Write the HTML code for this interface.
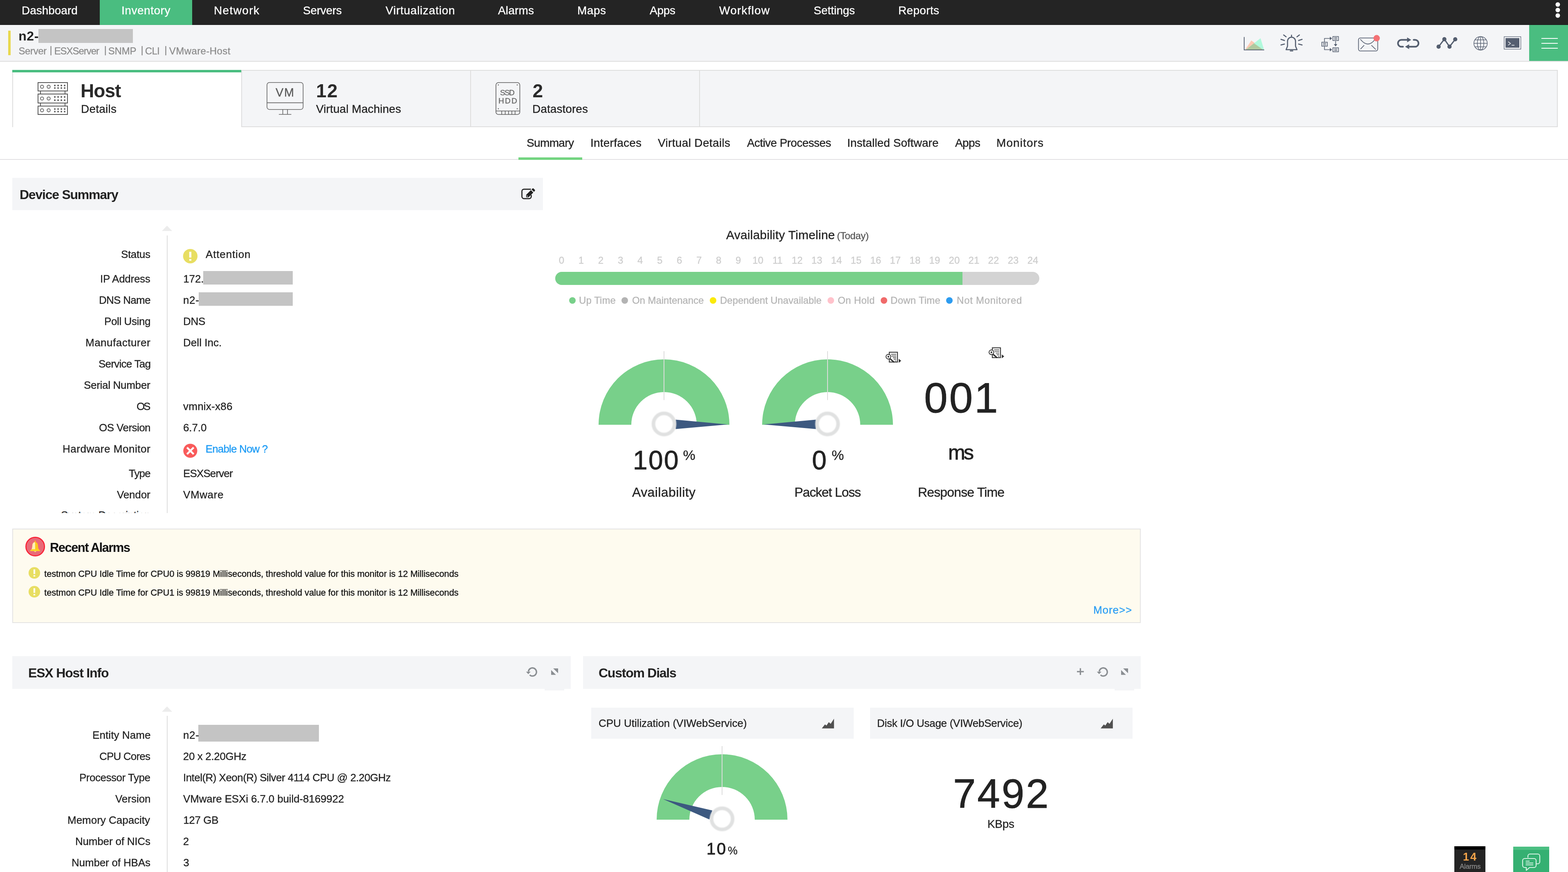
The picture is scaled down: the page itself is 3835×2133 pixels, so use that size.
<!DOCTYPE html>
<html lang="en">
<head>
<meta charset="utf-8">
<title>n2 - Host Details</title>
<style>
html,body{margin:0;padding:0;}
body{width:3835px;height:2133px;overflow:hidden;background:#fff;position:relative;font-family:"Liberation Sans",sans-serif;}
.b{position:absolute;}
.t{position:absolute;white-space:nowrap;font-family:"Liberation Sans",sans-serif;-webkit-text-stroke:0.35px currentColor;}
.k{-webkit-text-stroke:0.9px currentColor;}
.n{-webkit-text-stroke:0 currentColor;}
.h{width:60px;text-align:center;font-size:24px;line-height:29px;color:#cdcdcd;}
svg{position:absolute;left:0;top:0;}
</style>
</head>
<body>
<!-- top navigation -->
<div class="b" style="left:0;top:0;width:3835px;height:61px;background:#242424;border-bottom:1px solid #151515;box-sizing:border-box"></div>
<div class="b" style="left:244px;top:0;width:226px;height:61px;background:#4abd80;border-bottom:1px solid #3cae72;box-sizing:border-box"></div>
<!-- device header strip -->
<div class="b" style="left:0;top:61px;width:3835px;height:88px;background:#f4f5f7;border-bottom:2px solid #dedede"></div>
<div class="b" style="left:20px;top:75px;width:6px;height:60px;background:#e8d84f"></div>
<div class="b" style="left:94px;top:71px;width:231px;height:34px;background:#c4c4c4"></div>
<div class="b" style="left:3740px;top:61px;width:95px;height:88px;background:#4abd80"></div>
<!-- big tabs -->
<div class="b" style="left:30px;top:171px;width:3780px;height:140px;background:#f4f5f7;border:2px solid #dedede;box-sizing:border-box"></div>
<div class="b" style="left:30px;top:171px;width:560px;height:140px;background:#fff;border-left:2px solid #dedede;box-sizing:border-box"></div>
<div class="b" style="left:30px;top:171px;width:560px;height:6px;background:#4abd80"></div>
<div class="b" style="left:590px;top:171px;width:2px;height:140px;background:#dedede"></div>
<div class="b" style="left:1150px;top:172px;width:2px;height:138px;background:#dedede"></div>
<div class="b" style="left:1710px;top:172px;width:2px;height:138px;background:#dedede"></div>
<!-- sub tabs -->
<div class="b" style="left:0;top:389px;width:3835px;height:2px;background:#e2e1e3"></div>
<div class="b" style="left:1268px;top:385px;width:156px;height:6px;background:#73d480"></div>
<!-- device summary -->
<div class="b" style="left:30px;top:435px;width:1298px;height:79px;background:#f4f5f7"></div>
<div class="b" style="left:408px;top:576px;width:2px;height:679px;background:#dedede"></div>
<div class="b" style="left:497px;top:663px;width:219px;height:32.5px;background:#c4c4c4"></div>
<div class="b" style="left:486px;top:715px;width:230px;height:32.5px;background:#c4c4c4"></div>
<div class="b" style="left:0;top:1240px;width:409px;height:15px;overflow:hidden"><div class="t" style="right:41.5px;top:5px;font-size:26px;line-height:31px;color:#222;letter-spacing:-0.3px">System Description</div></div>
<!-- availability timeline -->
<div class="b" style="left:1358px;top:665px;width:1184px;height:32px;border-radius:16px;background:#d3d3d3;overflow:hidden"><div style="width:996px;height:32px;background:#78d08a"></div></div>
<!-- recent alarms -->
<div class="b" style="left:30px;top:1293px;width:2760px;height:231px;background:#fefbef;border:2px solid #e4e4e4;box-sizing:border-box"></div>
<!-- ESX host info -->
<div class="b" style="left:30px;top:1605px;width:1366px;height:80px;background:#f4f5f7"></div>
<div class="b" style="left:1332px;top:1685px;width:48px;height:4px;background:#f4f5f7"></div>
<div class="b" style="left:408px;top:1751px;width:2px;height:382px;background:#dedede"></div>
<div class="b" style="left:485px;top:1773px;width:295px;height:40.5px;background:#c4c4c4"></div>
<!-- custom dials -->
<div class="b" style="left:1426px;top:1605px;width:1364px;height:80px;background:#f4f5f7"></div>
<div class="b" style="left:2726px;top:1685px;width:48px;height:4px;background:#f4f5f7"></div>
<div class="b" style="left:1446px;top:1731px;width:642px;height:75.5px;background:#f4f5f7"></div>
<div class="b" style="left:2128px;top:1731px;width:642px;height:75.5px;background:#f4f5f7"></div>
<!-- bottom right widgets -->
<div class="b" style="left:3557px;top:2070px;width:76px;height:63px;background:#242424;border-top:8px solid #000;box-sizing:border-box"></div>
<div class="b" style="left:3701px;top:2071px;width:88px;height:62px;background:#35b072;border-top:8px solid #4bbf82;box-sizing:border-box"></div>

<svg width="3835" height="2133" viewBox="0 0 3835 2133">
<!-- three dots -->
<g fill="#fff"><circle cx="3810" cy="11" r="5.5"/><circle cx="3810" cy="24.5" r="5.5"/><circle cx="3810" cy="38" r="5.5"/></g>
<!-- hamburger -->
<g stroke="#fff" stroke-width="2"><path d="M3770 94H3810M3770 106H3810M3770 118H3810"/></g>
<!-- toolbar icon 1: area chart -->
<g>
<polygon points="3045.5,121.5 3060.5,99 3091.5,121.5" fill="#fdc9b3"/>
<polygon points="3047,121.5 3083,93.5 3091.5,121.5" fill="#adf9da" fill-opacity="0.95"/>
<polygon points="3047,121.5 3067,106 3089,121.5" fill="#b0c99f"/>
<path d="M3043 90.5V122.2H3092" fill="none" stroke="#4f596a" stroke-width="1.8"/>
</g>
<!-- toolbar icon 2: bell with rays -->
<g fill="none" stroke="#535d6e" stroke-width="2.6" stroke-linecap="round" stroke-linejoin="round">
<path d="M3145.5 121.5H3172.2L3168.6 113V101.5C3168.6 95.5 3164.5 91 3158.8 91C3153.1 91 3149 95.5 3149 101.5V113Z"/>
<path d="M3158.8 86V90.5M3155.8 124.5H3161.8"/>
<path d="M3139.5 85.5L3145.5 90M3133 96.3L3141.5 99M3133 110L3141.5 107.8M3178.1 85.5L3172.1 90M3184.6 96.3L3176.1 99M3184.6 110L3176.1 107.8"/>
</g>
<!-- toolbar icon 3: workflow -->
<g fill="none" stroke="#535d6e" stroke-width="1.6">
<rect x="3260" y="89.4" width="13.6" height="9.8"/><path d="M3263 92.6H3270.6M3263 96H3270.6"/>
<rect x="3232.8" y="103.3" width="13.6" height="9.6"/><path d="M3235.8 106.4H3243.4M3235.8 109.8H3243.4"/>
<rect x="3260" y="116.8" width="13.6" height="9.8"/><path d="M3263 120H3270.6M3263 123.4H3270.6"/>
<path d="M3239.4 102.5V94H3253M3239.4 113.6V121.5H3253M3266.6 100.5V109"/>
</g>
<g fill="#535d6e"><polygon points="3252.5,89.8 3258,94 3252.5,98.2"/><polygon points="3252.5,117.3 3258,121.5 3252.5,125.7"/><polygon points="3262.4,108 3270.8,108 3266.6,113.5"/></g>
<!-- toolbar icon 4: envelope -->
<g fill="none" stroke="#5b6475" stroke-width="1.8" stroke-linecap="round">
<rect x="3322.6" y="92.8" width="47" height="31.8" rx="4.5"/>
<path d="M3327.6 96.5Q3345.8 119 3363 96.5M3336 111.2L3328 119.6M3354.6 111.2L3364.4 120.6"/>
</g>
<circle cx="3367" cy="93.4" r="7.8" fill="#f47174"/>
<!-- toolbar icon 5: loop -->
<g fill="none" stroke="#535d6e" stroke-width="4" stroke-linecap="round">
<path d="M3443 97.5H3427.5A8.4 8.4 0 0 0 3427.5 114.3H3431.5"/>
<path d="M3445 114.3H3461A8.4 8.4 0 0 0 3461 97.5H3457.5"/>
</g>
<g fill="#535d6e"><polygon points="3441.5,91.5 3451.5,97.5 3441.5,103.5"/><polygon points="3446.5,108.3 3436.5,114.3 3446.5,120.3"/></g>
<!-- toolbar icon 6: line nodes -->
<g fill="#535d6e" stroke="#535d6e" stroke-width="3"><path d="M3518.5 114.2L3532.6 95.8L3545.2 114.2L3559.2 96.2" fill="none"/><circle cx="3518.5" cy="114.2" r="3.6"/><circle cx="3532.6" cy="95.8" r="3.6"/><circle cx="3545.2" cy="114.2" r="3.6"/><circle cx="3559.2" cy="96.2" r="3.6"/></g>
<!-- toolbar icon 7: globe -->
<g fill="none" stroke="#5b6475" stroke-width="1.5">
<circle cx="3621.2" cy="106" r="16.4"/><ellipse cx="3621.2" cy="106" rx="8" ry="16.4"/><path d="M3621.2 89.6V122.4M3604.8 106H3637.6M3607.2 97.5H3635.2M3607.2 114.5H3635.2"/>
</g>
<!-- toolbar icon 8: terminal -->
<rect x="3678.8" y="89.7" width="40.8" height="30.6" fill="#f4f5f7" stroke="#535d6e" stroke-width="1.2"/>
<rect x="3682.2" y="93.2" width="33.8" height="23.4" fill="#555e70"/>
<path d="M3688.6 102L3694.4 106.3L3688.6 110.6M3697 110.6H3704" fill="none" stroke="#e4e6ea" stroke-width="1.6"/>

<!-- host icon -->
<g fill="none" stroke="#585858" stroke-width="2">
<rect x="93" y="202" width="72" height="20.5"/><rect x="93" y="230" width="72" height="22"/><rect x="93" y="259.5" width="72" height="20.5"/>
<path d="M99 222.5V230M159 222.5V230M99 252V259.5M159 252V259.5"/>
</g>
<g fill="none" stroke="#777" stroke-width="2.1">
<circle cx="102.8" cy="212.2" r="3.8"/><circle cx="119" cy="212.2" r="3.8"/>
<circle cx="102.8" cy="241" r="3.8"/><circle cx="119" cy="241" r="3.8"/>
<circle cx="102.8" cy="269.8" r="3.8"/><circle cx="119" cy="269.8" r="3.8"/>
</g>
<g fill="#5c5c5c">
<rect x="132.3" y="207.3" width="3.6" height="3.6" rx="0.6"/><rect x="140.3" y="207.3" width="3.6" height="3.6" rx="0.6"/><rect x="148.3" y="207.3" width="3.6" height="3.6" rx="0.6"/><rect x="156.3" y="207.3" width="3.6" height="3.6" rx="0.6"/>
<rect x="132.3" y="213.4" width="3.6" height="3.6" rx="0.6"/><rect x="140.3" y="213.4" width="3.6" height="3.6" rx="0.6"/><rect x="148.3" y="213.4" width="3.6" height="3.6" rx="0.6"/><rect x="156.3" y="213.4" width="3.6" height="3.6" rx="0.6"/>
<rect x="132.3" y="235.3" width="3.6" height="3.6" rx="0.6"/><rect x="140.3" y="235.3" width="3.6" height="3.6" rx="0.6"/><rect x="148.3" y="235.3" width="3.6" height="3.6" rx="0.6"/><rect x="156.3" y="235.3" width="3.6" height="3.6" rx="0.6"/>
<rect x="132.3" y="243.3" width="3.6" height="3.6" rx="0.6"/><rect x="140.3" y="243.3" width="3.6" height="3.6" rx="0.6"/><rect x="148.3" y="243.3" width="3.6" height="3.6" rx="0.6"/><rect x="156.3" y="243.3" width="3.6" height="3.6" rx="0.6"/>
<rect x="132.3" y="265" width="3.6" height="3.6" rx="0.6"/><rect x="140.3" y="265" width="3.6" height="3.6" rx="0.6"/><rect x="148.3" y="265" width="3.6" height="3.6" rx="0.6"/><rect x="156.3" y="265" width="3.6" height="3.6" rx="0.6"/>
<rect x="132.3" y="271.2" width="3.6" height="3.6" rx="0.6"/><rect x="140.3" y="271.2" width="3.6" height="3.6" rx="0.6"/><rect x="148.3" y="271.2" width="3.6" height="3.6" rx="0.6"/><rect x="156.3" y="271.2" width="3.6" height="3.6" rx="0.6"/>
</g>
<!-- VM icon -->
<g fill="none" stroke="#636363" stroke-width="1.6">
<rect x="653" y="201.8" width="88.4" height="66" rx="6"/><path d="M653 251.4H741.4M691.6 268V279.6M703.2 268V279.6M682 279.8H712.5"/>
</g>
<!-- SSD icon -->
<g fill="none" stroke="#5a5a5a" stroke-width="1.6">
<rect x="1213" y="202" width="58.4" height="78" rx="6"/><path d="M1213 271.5H1271.4M1227.2 271.5V280M1235.6 271.5V280M1243.7 271.5V280M1251.8 271.5V280M1259.7 271.5V280"/>
</g>
<g fill="#5a5a5a"><circle cx="1218.8" cy="207.8" r="1.3"/><circle cx="1265" cy="207.8" r="1.3"/><circle cx="1218.8" cy="266" r="1.3"/><circle cx="1265" cy="266" r="1.3"/></g>

<!-- edit icon -->
<g>
<path d="M1297.6 462.8H1281.5A5 5 0 0 0 1276.5 467.8V480.8A5 5 0 0 0 1281.5 485.8H1294.3A5 5 0 0 0 1299.3 480.8V477.8" fill="none" stroke="#222" stroke-width="2.7" stroke-linecap="round"/>
<path d="M1286.9 482.4V476.6L1298.5 465L1304.4 470.9L1292.8 482.4Z M1300 463.4L1302.3 461.2A2 2 0 0 1 1305 461.2L1308.1 464.3A2 2 0 0 1 1308.1 467L1305.9 469.3Z" fill="#222"/>
<path d="M1288.6 477.6L1291.7 480.7L1288.6 480.7Z" fill="#f4f5f7"/>
</g>
<!-- scroll arrows (triangles) -->
<polygon points="396,565 408.5,552 421,565" fill="#ececec"/>
<polygon points="396,1741 408.5,1728 421,1741" fill="#ececec"/>
<defs>
<filter id="hb" x="-30%" y="-30%" width="160%" height="160%"><feGaussianBlur stdDeviation="0.8"/></filter>
<g id="gauge">
<path d="M-160 0A160 160 0 0 1 160 0H80A80 80 0 0 0 -80 0Z" fill="#78d08a"/>
<path d="M0 -180V-60.5" stroke="#dcdcdc" stroke-width="2"/>
</g>
<g id="hub">
<circle cx="0" cy="0" r="25.8" fill="none" stroke="#e0e1e1" stroke-width="8.8" filter="url(#hb)"/>
</g>
<g id="zoomlist">
<rect x="25" y="1" width="20" height="24" fill="#fff" stroke="#3a3a3a" stroke-width="2.2"/>
<path d="M29.5 6H42M30.5 10.2H42M33.6 14.2H42M35.7 18H42M39.4 22H42" stroke="#444" stroke-width="1.7"/>
<circle cx="22.8" cy="11.9" r="5.8" fill="#fff" stroke="#3a3a3a" stroke-width="2"/>
<path d="M22.8 9.2L25.5 11.9L22.8 14.6L20.1 11.9Z" fill="#333"/>
<path d="M27 17L36.8 25.5" stroke="#2e2e2e" stroke-width="3.2"/>
<polygon points="48.2,17.2 48.2,26.8 54,22" fill="#2e2e2e"/>
</g>
<g id="attn"><circle cx="0" cy="0" r="17.7" fill="#e8de62"/><rect x="-2.6" y="-10.8" width="5.2" height="14.2" fill="#fff"/><rect x="-2.6" y="7" width="5.2" height="4.2" fill="#fff"/></g>
<g id="refresh"><path d="M-9.6 -1.2A9.9 9.9 0 1 1 -6.5 7.4" fill="none" stroke="#8a8e92" stroke-width="3.4"/><polygon points="-15.4,-0.6 -4.2,-0.6 -9.9,5.4" fill="#8a8e92"/></g>
<g id="expand" fill="#8a8e92"><polygon points="5,-8 17,-8 17,3.6"/><polygon points="0,-4 0,7.7 11.8,7.7"/></g>
<polygon id="areaglyph" points="0,23.8 7.7,14 11.4,16.8 17,8.7 21.7,12.6 29.8,0 29.8,23.8" fill="#505050"/>
</defs>

<!-- status icons -->
<use href="#attn" x="465.4" y="626.6"/>
<g transform="translate(84 1401.4) scale(0.797)"><use href="#attn"/></g>
<g transform="translate(84 1447.4) scale(0.797)"><use href="#attn"/></g>
<circle cx="465.4" cy="1102.6" r="17.1" fill="#f95b5b"/>
<path d="M457.4 1094.6L473.6 1110.8M473.6 1094.6L457.4 1110.8" stroke="#fff" stroke-width="4.6"/>

<!-- legend dots -->
<circle cx="1400" cy="735" r="8" fill="#78d08a"/><circle cx="1528" cy="735" r="8" fill="#b3b3b3"/><circle cx="1744" cy="735" r="8" fill="#fbea0a"/><circle cx="2032" cy="735" r="8" fill="#ffc2cb"/><circle cx="2162" cy="735" r="8" fill="#f06a6a"/><circle cx="2322" cy="735" r="8" fill="#2d9cf0"/>

<!-- gauges -->
<use href="#gauge" x="1624" y="1039"/>
<polygon points="1652.5,1026.4 1780.5,1038.3 1652.5,1049.4" fill="#3d5980"/>
<use href="#hub" x="1624" y="1037"/>
<use href="#gauge" x="2024" y="1039"/>
<polygon points="1995.5,1026.4 1867.5,1038.3 1995.5,1049.4" fill="#3d5980"/>
<use href="#hub" x="2024" y="1037"/>
<use href="#gauge" x="1766" y="2005"/>
<polygon points="1742.2,1982.6 1621.5,1954.5 1735,2004.6" fill="#3d5980"/>
<use href="#hub" x="1766" y="2003"/>

<!-- small zoom-list icons -->
<use href="#zoomlist" x="2150" y="860.6"/>
<use href="#zoomlist" x="2402" y="849.8"/>

<!-- recent alarms bell -->
<circle cx="86.1" cy="1337" r="22.7" fill="#e96a78" stroke="#fa1e32" stroke-width="2.6"/>
<path d="M73.4 1347.8C77.4 1345.4 78.8 1341 79.1 1334.5C79.4 1329 82 1326 86 1326C90 1326 92.6 1329 92.9 1334.5C93.2 1341 94.6 1345.4 98.6 1347.8Z" fill="#fcc81e"/>
<path d="M73.4 1347.8C77.4 1345.4 78.8 1341 79.1 1334.5C79.4 1329 82 1326 86 1326V1347.8Z" fill="#fdf0b4"/>
<rect x="84.8" y="1322.6" width="2.4" height="4.4" fill="#fcc81e"/>
<path d="M77.2 1343.4H94.8L98.6 1347.8H73.4Z" fill="#fcd21e"/>
<path d="M82.6 1347.8H89.6L86.1 1350.8Z" fill="#f6e27a"/>

<!-- panel header icons -->
<use href="#refresh" x="1302" y="1643.6"/>
<use href="#expand" x="1348" y="1643.1"/>
<path d="M2634 1642.8H2650.8M2642.4 1634.6V1651" stroke="#8a8e92" stroke-width="3.3"/>
<use href="#refresh" x="2698.1" y="1643.6"/>
<use href="#expand" x="2742" y="1643.1"/>
<use href="#areaglyph" x="2010" y="1757.9"/>
<use href="#areaglyph" x="2692" y="1757.9"/>

<!-- chat icon -->
<g fill="none" stroke="#d9f3e5" stroke-width="2.2" stroke-linejoin="round">
<path d="M3737 2098V2094A5 5 0 0 1 3742 2089H3761A5 5 0 0 1 3766 2094V2108A5 5 0 0 1 3761 2113H3758"/>
<path d="M3729 2100H3752A5 5 0 0 1 3757 2105V2117A5 5 0 0 1 3752 2122H3741L3733 2129V2122H3729A5 5 0 0 1 3724 2117V2105A5 5 0 0 1 3729 2100Z"/>
<path d="M3731.5 2106.5H3741M3731.5 2111H3750M3731.5 2115.5H3750"/>
</g>

</svg>

<div class="b" style="left:0;top:0;width:3835px;height:2133px;will-change:transform">
<div class="t" style="left:53.00px;top:8.50px;font-size:28px;line-height:34px;color:#ffffff;letter-spacing:-0.025px;">Dashboard</div>
<div class="t" style="left:297.00px;top:8.50px;font-size:28px;line-height:34px;color:#ffffff;letter-spacing:0.531px;">Inventory</div>
<div class="t" style="left:523.00px;top:8.50px;font-size:28px;line-height:34px;color:#ffffff;letter-spacing:1.368px;">Network</div>
<div class="t" style="left:741.00px;top:8.50px;font-size:28px;line-height:34px;color:#ffffff;letter-spacing:-0.245px;">Servers</div>
<div class="t" style="left:943.00px;top:8.50px;font-size:28px;line-height:34px;color:#ffffff;letter-spacing:0.752px;">Virtualization</div>
<div class="t" style="left:1218.00px;top:8.50px;font-size:28px;line-height:34px;color:#ffffff;letter-spacing:0.177px;">Alarms</div>
<div class="t" style="left:1412.00px;top:8.50px;font-size:28px;line-height:34px;color:#ffffff;letter-spacing:0.510px;">Maps</div>
<div class="t" style="left:1589.00px;top:8.50px;font-size:28px;line-height:34px;color:#ffffff;letter-spacing:-0.273px;">Apps</div>
<div class="t" style="left:1759.00px;top:8.50px;font-size:28px;line-height:34px;color:#ffffff;letter-spacing:1.230px;">Workflow</div>
<div class="t" style="left:1990.00px;top:8.50px;font-size:28px;line-height:34px;color:#ffffff;letter-spacing:-0.025px;">Settings</div>
<div class="t" style="left:2197.00px;top:8.50px;font-size:28px;line-height:34px;color:#ffffff;letter-spacing:0.326px;">Reports</div>
<div class="t n" style="left:45.21px;top:69.00px;font-size:32px;line-height:38px;color:#222222;font-weight:700;letter-spacing:0.568px;">n2-</div>
<div class="t" style="left:45.42px;top:110.00px;font-size:24px;line-height:29px;color:#8c8c8c;letter-spacing:-0.349px;">Server</div>
<div class="t" style="left:132.63px;top:110.00px;font-size:24px;line-height:29px;color:#8c8c8c;letter-spacing:-1.044px;">ESXServer</div>
<div class="t" style="left:264.84px;top:110.00px;font-size:24px;line-height:29px;color:#8c8c8c;letter-spacing:-0.251px;">SNMP</div>
<div class="t" style="left:354.79px;top:110.00px;font-size:24px;line-height:29px;color:#8c8c8c;letter-spacing:-0.735px;">CLI</div>
<div class="t" style="left:413.84px;top:110.00px;font-size:24px;line-height:29px;color:#8c8c8c;letter-spacing:0.421px;">VMware-Host</div>
<div class="t" style="left:121.50px;top:106.80px;font-size:24px;line-height:29px;color:#8c8c8c;">|</div>
<div class="t" style="left:254.70px;top:106.80px;font-size:24px;line-height:29px;color:#8c8c8c;">|</div>
<div class="t" style="left:344.60px;top:106.80px;font-size:24px;line-height:29px;color:#8c8c8c;">|</div>
<div class="t" style="left:402.30px;top:106.80px;font-size:24px;line-height:29px;color:#8c8c8c;">|</div>
<div class="t n" style="left:197.00px;top:195.00px;font-size:46px;line-height:55px;color:#2a2a2a;font-weight:700;letter-spacing:-0.967px;">Host</div>
<div class="t" style="left:198.00px;top:250.00px;font-size:28px;line-height:34px;color:#222222;letter-spacing:0.236px;">Details</div>
<div class="t n" style="left:773.10px;top:195.00px;font-size:46px;line-height:55px;color:#2a2a2a;font-weight:700;letter-spacing:1.317px;">12</div>
<div class="t" style="left:773.00px;top:250.00px;font-size:28px;line-height:34px;color:#222222;letter-spacing:0.102px;">Virtual Machines</div>
<div class="t n" style="left:1302.50px;top:195.00px;font-size:46px;line-height:55px;color:#2a2a2a;font-weight:700;">2</div>
<div class="t" style="left:1302.00px;top:250.00px;font-size:28px;line-height:34px;color:#222222;letter-spacing:0.067px;">Datastores</div>
<div class="t" style="left:674.05px;top:208.80px;font-size:29px;line-height:35px;color:#5a5a5a;letter-spacing:1.607px;">VM</div>
<div class="t" style="left:1223.10px;top:214.70px;font-size:19px;line-height:23px;color:#666;letter-spacing:-1.723px;">SSD</div>
<div class="t" style="left:1219.00px;top:234.60px;font-size:19px;line-height:23px;color:#666;letter-spacing:2.279px;">HDD</div>
<div class="t" style="left:1288.00px;top:332.50px;font-size:28px;line-height:34px;color:#222222;letter-spacing:-0.632px;">Summary</div>
<div class="t" style="left:1444.00px;top:332.50px;font-size:28px;line-height:34px;color:#222222;letter-spacing:0.228px;">Interfaces</div>
<div class="t" style="left:1609.00px;top:332.50px;font-size:28px;line-height:34px;color:#222222;letter-spacing:0.341px;">Virtual Details</div>
<div class="t" style="left:1827.00px;top:332.50px;font-size:28px;line-height:34px;color:#222222;letter-spacing:-0.583px;">Active Processes</div>
<div class="t" style="left:2072.00px;top:332.50px;font-size:28px;line-height:34px;color:#222222;letter-spacing:0.059px;">Installed Software</div>
<div class="t" style="left:2336.00px;top:332.50px;font-size:28px;line-height:34px;color:#222222;letter-spacing:-0.607px;">Apps</div>
<div class="t" style="left:2437.00px;top:332.50px;font-size:28px;line-height:34px;color:#222222;letter-spacing:1.091px;">Monitors</div>
<div class="t n" style="left:48.00px;top:457.00px;font-size:32px;line-height:38px;color:#222222;font-weight:700;letter-spacing:-1.240px;">Device Summary</div>
<div class="t" style="left:296.00px;top:606.50px;font-size:26px;line-height:31px;color:#222222;letter-spacing:-0.352px;">Status</div>
<div class="t" style="left:245.00px;top:666.50px;font-size:26px;line-height:31px;color:#222222;letter-spacing:-0.269px;">IP Address</div>
<div class="t" style="left:242.00px;top:718.50px;font-size:26px;line-height:31px;color:#222222;letter-spacing:-0.723px;">DNS Name</div>
<div class="t" style="left:255.00px;top:770.50px;font-size:26px;line-height:31px;color:#222222;letter-spacing:-0.393px;">Poll Using</div>
<div class="t" style="left:209.00px;top:822.50px;font-size:26px;line-height:31px;color:#222222;letter-spacing:0.493px;">Manufacturer</div>
<div class="t" style="left:241.00px;top:874.50px;font-size:26px;line-height:31px;color:#222222;letter-spacing:-0.743px;">Service Tag</div>
<div class="t" style="left:205.00px;top:926.50px;font-size:26px;line-height:31px;color:#222222;letter-spacing:-0.297px;">Serial Number</div>
<div class="t" style="left:334.00px;top:978.50px;font-size:26px;line-height:31px;color:#222222;letter-spacing:-3.274px;">OS</div>
<div class="t" style="left:242.00px;top:1030.50px;font-size:26px;line-height:31px;color:#222222;letter-spacing:-0.556px;">OS Version</div>
<div class="t" style="left:153.00px;top:1082.50px;font-size:26px;line-height:31px;color:#222222;letter-spacing:0.532px;">Hardware Monitor</div>
<div class="t" style="left:315.00px;top:1142.50px;font-size:26px;line-height:31px;color:#222222;letter-spacing:-0.986px;">Type</div>
<div class="t" style="left:286.00px;top:1194.50px;font-size:26px;line-height:31px;color:#222222;letter-spacing:-0.159px;">Vendor</div>
<div class="t" style="left:502.95px;top:606.50px;font-size:26px;line-height:31px;color:#222222;letter-spacing:0.866px;">Attention</div>
<div class="t" style="left:448.26px;top:666.50px;font-size:26px;line-height:31px;color:#222222;letter-spacing:-0.143px;">172.</div>
<div class="t" style="left:448.05px;top:718.50px;font-size:26px;line-height:31px;color:#222222;letter-spacing:0.490px;">n2-</div>
<div class="t" style="left:448.00px;top:770.50px;font-size:26px;line-height:31px;color:#222222;letter-spacing:-0.301px;">DNS</div>
<div class="t" style="left:448.00px;top:822.50px;font-size:26px;line-height:31px;color:#222222;letter-spacing:0.044px;">Dell Inc.</div>
<div class="t" style="left:448.00px;top:978.50px;font-size:26px;line-height:31px;color:#222222;letter-spacing:0.242px;">vmnix-x86</div>
<div class="t" style="left:448.00px;top:1030.50px;font-size:26px;line-height:31px;color:#222222;letter-spacing:-0.104px;">6.7.0</div>
<div class="t" style="left:502.79px;top:1082.50px;font-size:26px;line-height:31px;color:#1a9af5;letter-spacing:-0.856px;">Enable Now ?</div>
<div class="t" style="left:448.00px;top:1142.50px;font-size:26px;line-height:31px;color:#222222;letter-spacing:-0.874px;">ESXServer</div>
<div class="t" style="left:448.00px;top:1194.50px;font-size:26px;line-height:31px;color:#222222;letter-spacing:0.611px;">VMware</div>
<div class="t" style="left:1776.00px;top:556.50px;font-size:30px;line-height:36px;color:#222222;letter-spacing:0.241px;">Availability Timeline</div>
<div class="t" style="left:2047.00px;top:562.00px;font-size:24px;line-height:29px;color:#555;letter-spacing:-0.339px;">(Today)</div>
<div class="t" style="left:1416.10px;top:720.00px;font-size:24px;line-height:29px;color:#b4b4b4;letter-spacing:0.060px;">Up Time</div>
<div class="t" style="left:1546.00px;top:720.00px;font-size:24px;line-height:29px;color:#b4b4b4;letter-spacing:-0.059px;">On Maintenance</div>
<div class="t" style="left:1761.10px;top:720.00px;font-size:24px;line-height:29px;color:#b4b4b4;letter-spacing:-0.063px;">Dependent Unavailable</div>
<div class="t" style="left:2049.00px;top:720.00px;font-size:24px;line-height:29px;color:#b4b4b4;letter-spacing:0.384px;">On Hold</div>
<div class="t" style="left:2178.10px;top:720.00px;font-size:24px;line-height:29px;color:#b4b4b4;letter-spacing:0.210px;">Down Time</div>
<div class="t" style="left:2340.10px;top:720.00px;font-size:24px;line-height:29px;color:#b4b4b4;letter-spacing:0.709px;">Not Monitored</div>
<div class="t k" style="left:1548.00px;top:1087.50px;font-size:64px;line-height:77px;color:#222222;letter-spacing:2.406px;">100</div>
<div class="t" style="left:1670.50px;top:1092.50px;font-size:34px;line-height:41px;color:#222222;">%</div>
<div class="t k" style="left:1986.00px;top:1087.50px;font-size:64px;line-height:77px;color:#222222;">0</div>
<div class="t" style="left:2034.00px;top:1092.50px;font-size:34px;line-height:41px;color:#222222;">%</div>
<div class="t" style="left:1546.00px;top:1185.00px;font-size:32px;line-height:38px;color:#222222;letter-spacing:0.401px;">Availability</div>
<div class="t" style="left:1943.00px;top:1185.00px;font-size:32px;line-height:38px;color:#222222;letter-spacing:-1.131px;">Packet Loss</div>
<div class="t" style="left:2245.00px;top:1185.00px;font-size:32px;line-height:38px;color:#222222;letter-spacing:-0.851px;">Response Time</div>
<div class="t k" style="left:2260.00px;top:910.50px;font-size:104px;line-height:125px;color:#222222;letter-spacing:3.660px;">001</div>
<div class="t k" style="left:2319.00px;top:1077.00px;font-size:50px;line-height:60px;color:#222222;letter-spacing:-3.650px;">ms</div>
<div class="t n" style="left:122.00px;top:1321.00px;font-size:31px;line-height:37px;color:#111;font-weight:700;letter-spacing:-1.579px;">Recent Alarms</div>
<div class="t" style="left:108.21px;top:1390.50px;font-size:22px;line-height:26px;color:#111;letter-spacing:-0.156px;">testmon CPU Idle Time for CPU0 is 99819 Milliseconds, threshold value for this monitor is 12 Milliseconds</div>
<div class="t" style="left:108.21px;top:1436.50px;font-size:22px;line-height:26px;color:#111;letter-spacing:-0.156px;">testmon CPU Idle Time for CPU1 is 99819 Milliseconds, threshold value for this monitor is 12 Milliseconds</div>
<div class="t" style="left:2674.00px;top:1476.50px;font-size:26px;line-height:31px;color:#2a9df4;letter-spacing:0.916px;">More&gt;&gt;</div>
<div class="t n" style="left:69.00px;top:1627.00px;font-size:32px;line-height:38px;color:#222222;font-weight:700;letter-spacing:-1.176px;">ESX Host Info</div>
<div class="t n" style="left:1464.00px;top:1627.00px;font-size:32px;line-height:38px;color:#222222;font-weight:700;letter-spacing:-1.244px;">Custom Dials</div>
<div class="t" style="left:226.00px;top:1782.50px;font-size:26px;line-height:31px;color:#222222;letter-spacing:0.081px;">Entity Name</div>
<div class="t" style="left:243.00px;top:1834.50px;font-size:26px;line-height:31px;color:#222222;letter-spacing:-0.815px;">CPU Cores</div>
<div class="t" style="left:194.00px;top:1886.50px;font-size:26px;line-height:31px;color:#222222;letter-spacing:-0.478px;">Processor Type</div>
<div class="t" style="left:282.00px;top:1938.50px;font-size:26px;line-height:31px;color:#222222;letter-spacing:-0.035px;">Version</div>
<div class="t" style="left:165.00px;top:1990.50px;font-size:26px;line-height:31px;color:#222222;letter-spacing:-0.016px;">Memory Capacity</div>
<div class="t" style="left:184.00px;top:2042.50px;font-size:26px;line-height:31px;color:#222222;letter-spacing:-0.187px;">Number of NICs</div>
<div class="t" style="left:175.00px;top:2094.50px;font-size:26px;line-height:31px;color:#222222;letter-spacing:-0.163px;">Number of HBAs</div>
<div class="t" style="left:448.05px;top:1782.50px;font-size:26px;line-height:31px;color:#222222;letter-spacing:0.490px;">n2-</div>
<div class="t" style="left:447.79px;top:1834.50px;font-size:26px;line-height:31px;color:#222222;letter-spacing:-0.356px;">20 x 2.20GHz</div>
<div class="t" style="left:448.00px;top:1886.50px;font-size:26px;line-height:31px;color:#222222;letter-spacing:-0.542px;">Intel(R) Xeon(R) Silver 4114 CPU @ 2.20GHz</div>
<div class="t" style="left:448.00px;top:1938.50px;font-size:26px;line-height:31px;color:#222222;letter-spacing:-0.135px;">VMware ESXi 6.7.0 build-8169922</div>
<div class="t" style="left:448.26px;top:1990.50px;font-size:26px;line-height:31px;color:#222222;letter-spacing:-0.375px;">127 GB</div>
<div class="t" style="left:447.80px;top:2042.50px;font-size:26px;line-height:31px;color:#222222;">2</div>
<div class="t" style="left:448.30px;top:2094.50px;font-size:26px;line-height:31px;color:#222222;">3</div>
<div class="t" style="left:1464.00px;top:1753.50px;font-size:26px;line-height:31px;color:#222222;letter-spacing:-0.037px;">CPU Utilization (VIWebService)</div>
<div class="t" style="left:2145.00px;top:1753.50px;font-size:26px;line-height:31px;color:#222222;letter-spacing:-0.288px;">Disk I/O Usage (VIWebService)</div>
<div class="t k" style="left:1728.00px;top:2052.00px;font-size:40px;line-height:48px;color:#222222;letter-spacing:2.754px;">10</div>
<div class="t" style="left:1780.00px;top:2065.00px;font-size:27px;line-height:32px;color:#222222;">%</div>
<div class="t k" style="left:2331.00px;top:1880.50px;font-size:100px;line-height:120px;color:#222222;letter-spacing:3.718px;">7492</div>
<div class="t" style="left:2415.00px;top:1998.50px;font-size:28px;line-height:34px;color:#222222;letter-spacing:-0.308px;">KBps</div>
<div class="t n" style="left:3578.10px;top:2080.00px;font-size:27px;line-height:32px;color:#f5a54a;font-weight:700;letter-spacing:2.884px;">14</div>
<div class="t" style="left:3570.00px;top:2109.50px;font-size:17px;line-height:20px;color:#8a8a8a;letter-spacing:-0.279px;">Alarms</div>
<div class="t h" style="left:1343.5px;top:622.00px;">0</div>
<div class="t h" style="left:1391.5px;top:622.00px;">1</div>
<div class="t h" style="left:1439.5px;top:622.00px;">2</div>
<div class="t h" style="left:1487.6px;top:622.00px;">3</div>
<div class="t h" style="left:1535.6px;top:622.00px;">4</div>
<div class="t h" style="left:1583.6px;top:622.00px;">5</div>
<div class="t h" style="left:1631.6px;top:622.00px;">6</div>
<div class="t h" style="left:1679.6px;top:622.00px;">7</div>
<div class="t h" style="left:1727.7px;top:622.00px;">8</div>
<div class="t h" style="left:1775.7px;top:622.00px;">9</div>
<div class="t h" style="left:1823.7px;top:622.00px;">10</div>
<div class="t h" style="left:1871.7px;top:622.00px;">11</div>
<div class="t h" style="left:1919.7px;top:622.00px;">12</div>
<div class="t h" style="left:1967.8px;top:622.00px;">13</div>
<div class="t h" style="left:2015.8px;top:622.00px;">14</div>
<div class="t h" style="left:2063.8px;top:622.00px;">15</div>
<div class="t h" style="left:2111.8px;top:622.00px;">16</div>
<div class="t h" style="left:2159.8px;top:622.00px;">17</div>
<div class="t h" style="left:2207.9px;top:622.00px;">18</div>
<div class="t h" style="left:2255.9px;top:622.00px;">19</div>
<div class="t h" style="left:2303.9px;top:622.00px;">20</div>
<div class="t h" style="left:2351.9px;top:622.00px;">21</div>
<div class="t h" style="left:2399.9px;top:622.00px;">22</div>
<div class="t h" style="left:2448.0px;top:622.00px;">23</div>
<div class="t h" style="left:2496.0px;top:622.00px;">24</div>
</div>
</body>
</html>
